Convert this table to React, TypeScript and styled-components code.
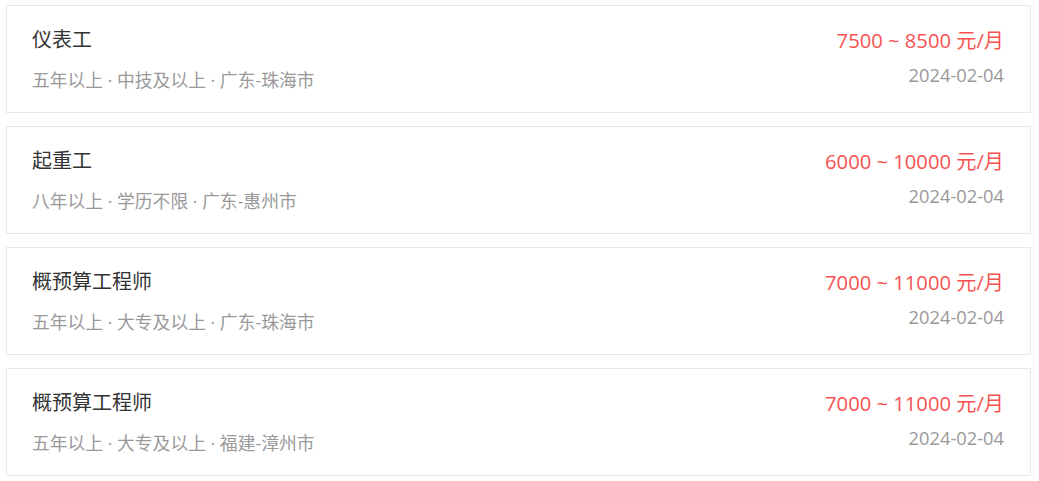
import React from "react";
import styled, { createGlobalStyle } from "styled-components";

const Global = createGlobalStyle`
  html, body { margin: 0; padding: 0; background: #fff; }
  body { font-family: "Open Sans", "Noto Sans CJK SC", sans-serif; }
`;

const List = styled.div`
  display: flex;
  flex-direction: column;
  gap: 13px;
  padding: 5px 8px 0 6px;
`;

const Card = styled.div`
  display: flex;
  justify-content: space-between;
  border: 1px solid #e8e8e8;
  background: #fff;
  padding: 20px 26px 20px 25px;
`;

const Col = styled.div<{ $right?: boolean }>`
  display: flex;
  flex-direction: column;
  align-items: ${(p) => (p.$right ? "flex-end" : "flex-start")};
`;

const Title = styled.div`
  font-size: 20px;
  line-height: 28px;
  color: #333;
`;

const Meta = styled.div`
  font-size: 17.8px;
  line-height: 24px;
  color: #999;
  margin-top: 14px;
`;

const Salary = styled.div`
  font-size: 20.2px;
  line-height: 28px;
  color: #f75252;
  white-space: pre;
`;

const DateText = styled.div`
  font-size: 18.3px;
  line-height: 24px;
  color: #999;
  margin-top: 9px;
`;

const jobs = [
  { title: "仪表工", meta: "五年以上 · 中技及以上 · 广东-珠海市", min: "7500", max: "8500", date: "2024-02-04" },
  { title: "起重工", meta: "八年以上 · 学历不限 · 广东-惠州市", min: "6000", max: "10000", date: "2024-02-04" },
  { title: "概预算工程师", meta: "五年以上 · 大专及以上 · 广东-珠海市", min: "7000", max: "11000", date: "2024-02-04" },
  { title: "概预算工程师", meta: "五年以上 · 大专及以上 · 福建-漳州市", min: "7000", max: "11000", date: "2024-02-04" },
];

export default function App() {
  return (
    <>
      <Global />
      <List>
        {jobs.map((j, i) => (
          <Card key={i}>
            <Col>
              <Title>{j.title}</Title>
              <Meta>{j.meta}</Meta>
            </Col>
            <Col $right>
              <Salary>{`${j.min} ~ ${j.max} 元/月`}</Salary>
              <DateText>{j.date}</DateText>
            </Col>
          </Card>
        ))}
      </List>
    </>
  );
}
